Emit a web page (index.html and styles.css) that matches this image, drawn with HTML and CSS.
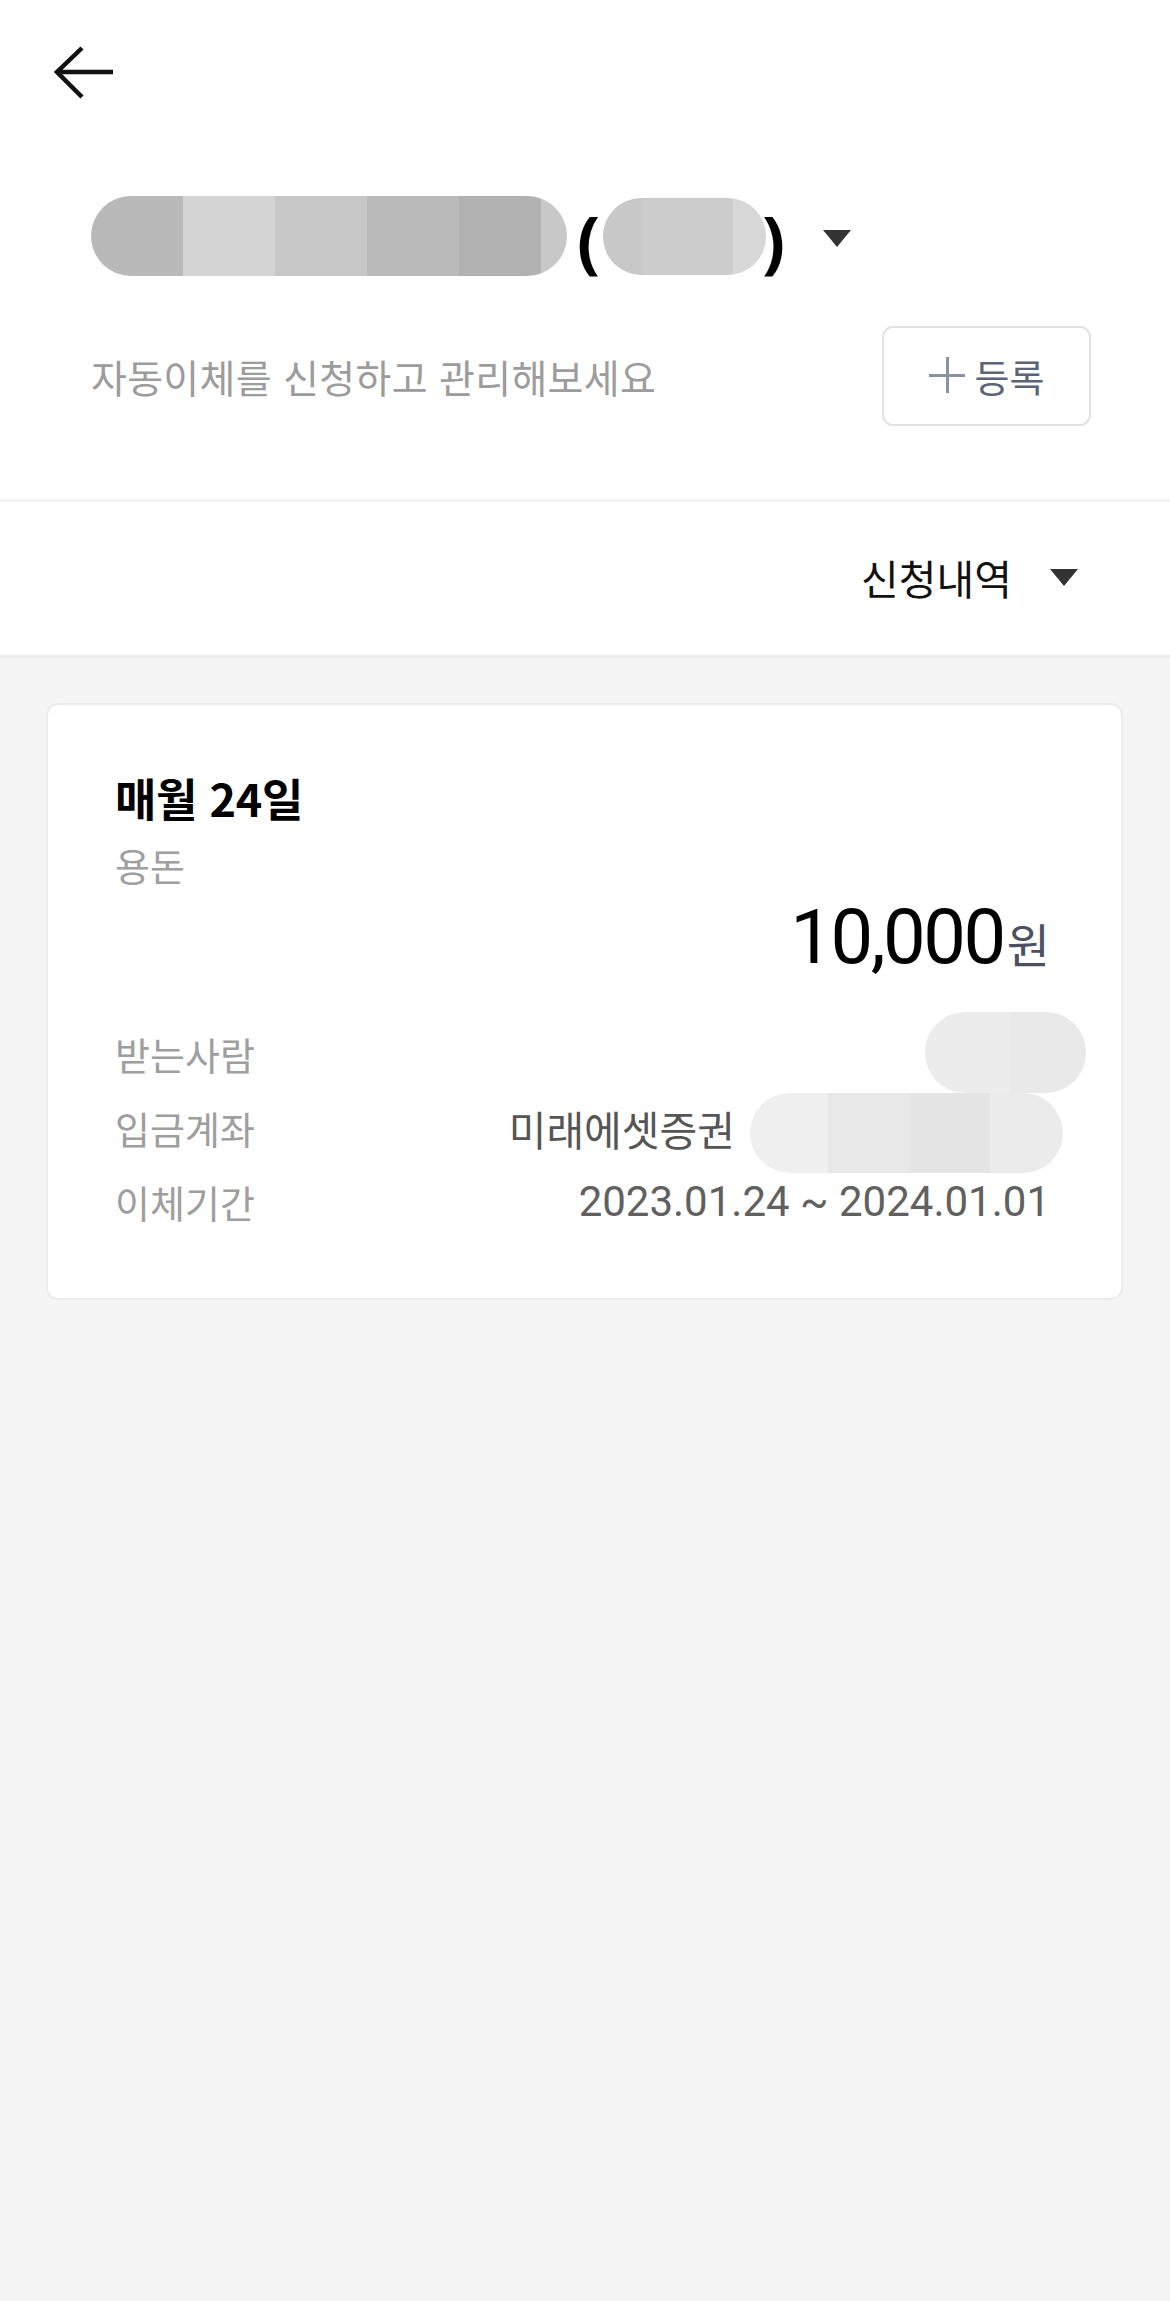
FILE: index.html
```html
<!DOCTYPE html>
<html lang="ko">
<head>
<meta charset="utf-8">
<title>자동이체</title>
<link rel="stylesheet" href="styles.css">
</head>
<body>
<div class="app">
  <header class="top">
    <button class="back" aria-label="뒤로">
      <svg width="62" height="54" viewBox="0 0 62 54"><path d="M28 2 L3 26 L28 51 M3 26 H59" fill="none" stroke="#111" stroke-width="4.5"/></svg>
    </button>
    <div class="name-row">
      <span class="blur blur-name"></span>
      <span class="paren paren-open">(</span>
      <span class="blur blur-id"></span>
      <span class="paren">)</span>
      <span class="caret caret-name"></span>
    </div>
    <div class="sub-row">
      <p class="sub">자동이체를 신청하고 관리해보세요</p>
      <button class="reg"><span class="plus"></span><span>등록</span></button>
    </div>
  </header>

  <div class="filter">
    <span class="filter-label">신청내역</span>
    <span class="caret"></span>
  </div>

  <main class="list">
    <article class="card">
      <h2 class="card-title">매월 24일</h2>
      <p class="card-memo">용돈</p>
      <p class="amount"><span class="num">10,000</span><span class="won">원</span></p>
      <div class="row">
        <span class="label">받는사람</span>
        <span class="blur blur-recv"></span>
      </div>
      <div class="row">
        <span class="label">입금계좌</span>
        <span class="value">미래에셋증권<span class="blur blur-acct"></span></span>
      </div>
      <div class="row">
        <span class="label">이체기간</span>
        <span class="value date">2023.01.24 ~ 2024.01.01</span>
      </div>
    </article>
  </main>
</div>
</body>
</html>
```

FILE: styles.css
```css
* { box-sizing: border-box; }
html, body { margin: 0; padding: 0; }
body {
  background: #f4f4f4;
  font-family: "Noto Sans CJK KR", "Noto Sans", sans-serif;
  color: #111;
}
.app { min-height: 2301px; background: #f4f4f4; }

.top {
  background: #fff;
  padding: 46px 79px 73px 91px;
  border-bottom: 3px solid #f1f1f1;
}
.back {
  display: block;
  margin: 0 0 0 -37px;
  padding: 0;
  border: 0;
  background: none;
  width: 62px;
  height: 54px;
}
.back svg { display: block; }

.name-row {
  display: flex;
  align-items: center;
  height: 82px;
  margin-top: 95px;
}
.blur { display: inline-block; }
.blur-name {
  width: 476px;
  height: 80px;
  border-radius: 40px;
  background: linear-gradient(90deg, #b9b9b9 0 92px, #d4d4d4 92px 184px, #c7c7c7 184px 276px, #bababa 276px 368px, #b1b1b1 368px 450px, #c8c8c8 450px);
}
.paren {
  font-family: "Noto Sans", sans-serif;
  font-weight: 700;
  font-size: 68px;
  line-height: 82px;
  color: #000;
  margin-top: 8px;
}
.paren-open { margin-left: 10px; }
.blur-id {
  width: 163px;
  height: 77px;
  margin: 0 -4px 0 3px;
  border-radius: 38px;
  background: linear-gradient(90deg, #c8c8c8 0 40px, #cccccc 40px 130px, #d8d8d8 130px);
}
.caret {
  display: inline-block;
  width: 0;
  height: 0;
  border-left: 14px solid transparent;
  border-right: 14px solid transparent;
  border-top: 17px solid #333;
}
.caret-name { margin-left: 38px; margin-top: 4px; }

.sub-row {
  display: flex;
  align-items: center;
  justify-content: space-between;
  margin-top: 49px;
}
.sub {
  margin: 0;
  font-size: 39px;
  line-height: 50px;
  color: #9c9c9c;
  letter-spacing: 0.3px;
}
.reg {
  display: flex;
  align-items: center;
  justify-content: center;
  gap: 10px;
  width: 209px;
  height: 100px;
  border: 2px solid #e2e2e2;
  border-radius: 11px;
  background: #fff;
  font-family: "Noto Sans CJK KR", sans-serif;
  font-size: 38px;
  color: #5b6478;
  padding: 0 0 2px;
}
.plus {
  position: relative;
  width: 36px;
  height: 36px;
  display: inline-block;
}
.plus::before, .plus::after {
  content: "";
  position: absolute;
  background: #8a93a3;
}
.plus::before { left: 0; right: 0; top: 17px; height: 3px; }
.plus::after { top: 0; bottom: 0; left: 17px; width: 3px; }

.filter {
  display: flex;
  align-items: center;
  justify-content: flex-end;
  gap: 38px;
  height: 156px;
  padding: 0 92px 4px 0;
  background: #fff;
  border-bottom: 3px solid #ebebeb;
}
.filter-label {
  font-size: 41px;
  line-height: 50px;
  color: #111;
}
.filter .caret { margin-top: 2px; }

.list { padding: 45px 47px 0 46px; }
.card {
  background: #fff;
  border: 2px solid #ebebeb;
  border-radius: 12px;
  padding: 68px 71px 59px 67px;
  height: 597px;
}
.card-title {
  margin: 0;
  font-size: 45px;
  font-weight: 700;
  line-height: 50px;
  color: #000;
  letter-spacing: -0.3px;
}
.card-memo {
  margin: 17px 0 0;
  font-size: 38px;
  line-height: 50px;
  color: #a0a0a0;
}
.amount {
  margin: 7px 0 0;
  display: flex;
  justify-content: flex-end;
  align-items: baseline;
  height: 80px;
  line-height: 80px;
}
.num {
  font-family: Roboto, "Noto Sans", sans-serif;
  font-size: 76px;
  letter-spacing: -2.5px;
  color: #000;
}
.won {
  font-size: 47px;
  color: #4b5162;
  margin-left: 3px;
}
.row {
  display: flex;
  align-items: center;
  justify-content: space-between;
  height: 74px;
}
.amount + .row { margin-top: 40px; }
.label {
  font-size: 38px;
  line-height: 50px;
  color: #9e9e9e;
}
.value {
  display: flex;
  align-items: center;
  font-size: 41px;
  line-height: 50px;
  color: #555;
}
.blur-recv {
  width: 161px;
  height: 81px;
  margin-right: -36px;
  margin-top: -4px;
  border-radius: 40px;
  background: linear-gradient(90deg, #ececec 0 85px, #e9e9e9 85px);
}
.blur-acct {
  width: 313px;
  height: 80px;
  margin: 10px -13px 0 15px;
  border-radius: 40px;
  background: linear-gradient(90deg, #efefef 0 78px, #e8e8e8 78px 160px, #e5e5e5 160px 240px, #ebebeb 240px);
}
.date {
  font-family: Roboto, "Noto Sans", sans-serif;
  font-size: 42px;
  letter-spacing: 0;
  color: #606060;
}
```
